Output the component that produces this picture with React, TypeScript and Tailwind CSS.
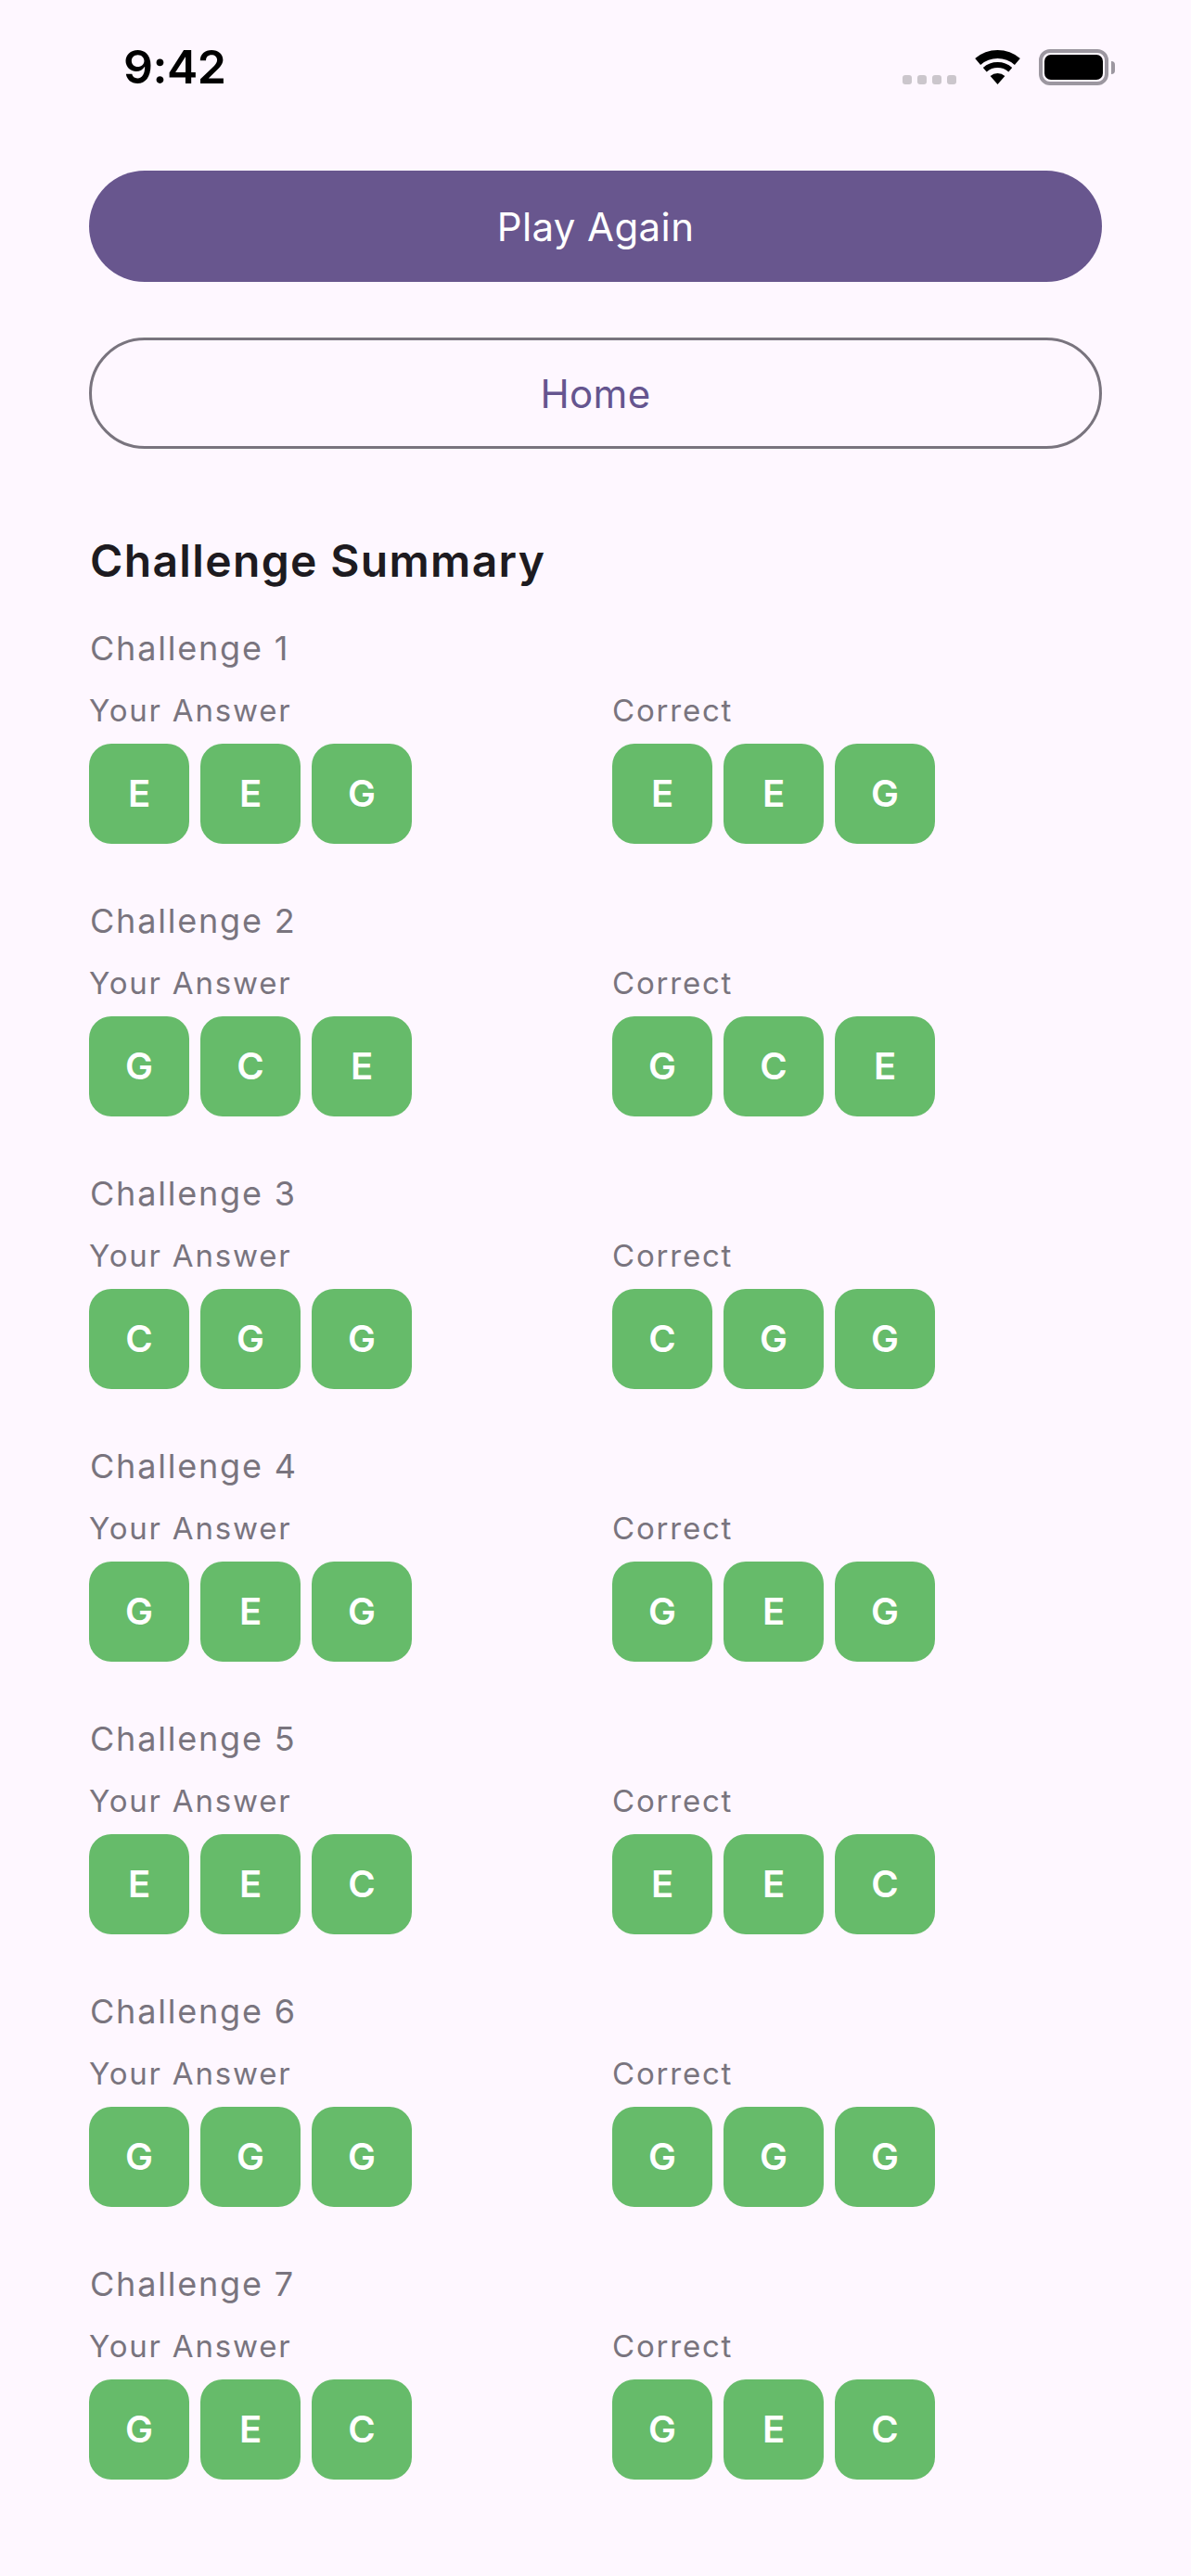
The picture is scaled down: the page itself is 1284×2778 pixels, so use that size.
const challenges = [
  ["E", "E", "G"],
  ["G", "C", "E"],
  ["C", "G", "G"],
  ["G", "E", "G"],
  ["E", "E", "C"],
  ["G", "G", "G"],
  ["G", "E", "C"],
];

function WifiIcon() {
  return (
    <svg width="49" height="37" viewBox="0 0 49 37" fill="#000">
      <path d="M0.2 9.1 A37 37 0 0 1 48.8 9.1 L42.9 15.9 A28 28 0 0 0 6.1 15.9 Z" />
      <path d="M8.8 18.9 A24 24 0 0 1 40.2 18.9 L36.3 23.4 A18 18 0 0 0 12.7 23.4 Z" />
      <path d="M16.6 27.9 A12 12 0 0 1 32.4 27.9 L24.5 37 Z" />
    </svg>
  );
}

function StatusBar() {
  return (
    <div className="flex h-[184px] items-start justify-between pl-[133px] pr-[82px] pt-[53px]">
      <span className="text-[50px] leading-[38px] font-semibold tracking-[-0.5px] text-black">9:42</span>
      <div className="flex items-end">
        <div className="mb-[1px] mr-5 flex gap-1.5">
          {[0, 1, 2, 3].map((i) => (
            <div key={i} className="h-2.5 w-2.5 rounded-[3px] bg-[#cbc6cc]" />
          ))}
        </div>
        <div className="mr-5 mb-[1px]">
          <WifiIcon />
        </div>
        <div className="h-[39px] w-[75px] rounded-[12px] border-[4px] border-[#9c97a0] p-[2px]">
          <div className="h-full w-full rounded-[7px] bg-black" />
        </div>
        <div className="mb-[12px] ml-[3px] h-[14px] w-1 rounded-r-full bg-[#9c97a0]" />
      </div>
    </div>
  );
}

function Chips({ label, notes }: { label: string; notes: string[] }) {
  return (
    <div className="w-[564px] shrink-0">
      <p className="mb-[16px] text-[33px] leading-[40px] tracking-[1.8px] text-[#79747e]">{label}</p>
      <div className="flex gap-3">
        {notes.map((note, i) => (
          <div
            key={i}
            className="flex h-[108px] w-[108px] items-center justify-center rounded-[24px] bg-[#66bb6a] text-[40px] font-semibold text-white"
          >
            {note}
          </div>
        ))}
      </div>
    </div>
  );
}

export default function App() {
  return (
    <div className="min-h-[2778px] bg-[#fef7ff] font-['Inter',sans-serif]">
      <StatusBar />
      <div className="px-24">
        <button className="flex h-[120px] w-full items-center justify-center rounded-full bg-[#68568e] text-[42px] tracking-[0.4px] text-white">
          Play Again
        </button>
        <button className="mt-[60px] flex h-[120px] w-full items-center justify-center rounded-full border-[3px] border-[#79747e] text-[42px] tracking-[0.3px] text-[#65558f]">
          Home
        </button>
        <h2 className="mt-[93px] pl-[1px] text-[48px] leading-[56px] font-semibold tracking-[1.35px] text-[#1d1b20]">
          Challenge Summary
        </h2>
        <div className="mt-[44px] flex flex-col">
          {challenges.map((notes, i) => (
            <div key={i} className="h-[294px]">
              <p className="mb-[25px] h-[44px] pl-[1px] text-[36px] leading-[44px] tracking-[1.8px] text-[#79747e]">
                Challenge {i + 1}
              </p>
              <div className="flex">
                <Chips label="Your Answer" notes={notes} />
                <Chips label="Correct" notes={notes} />
              </div>
            </div>
          ))}
        </div>
      </div>
    </div>
  );
}
